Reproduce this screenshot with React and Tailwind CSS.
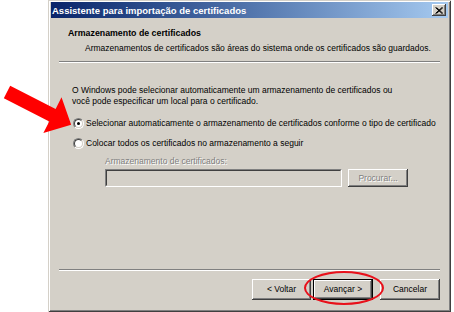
const raised =
  "bg-[#d4d0c8] shadow-[inset_-1px_-1px_0_#404040,inset_1px_1px_0_#ffffff,inset_-2px_-2px_0_#808080]";
const etched = "text-[#808080] [text-shadow:1px_1px_0_#ffffff]";

function Radio({ checked }) {
  return (
    <div className="w-[11px] h-[11px] rounded-full border border-t-[#808080] border-l-[#808080] border-b-white border-r-white">
      <div className="w-full h-full rounded-full border border-t-[#404040] border-l-[#404040] border-b-[#d4d0c8] border-r-[#d4d0c8] bg-white flex items-center justify-center">
        {checked && <div className="w-[3px] h-[3px] rounded-full bg-black" />}
      </div>
    </div>
  );
}

function Button({ children, primary, disabled, className = "" }) {
  return (
    <div
      className={`flex items-center justify-center ${raised} ${primary ? "border border-black" : ""} ${
        disabled ? etched : ""
      } ${className}`}
    >
      {children}
    </div>
  );
}

function Separator({ className = "" }) {
  return <div className={`mx-[8px] h-[2px] border-t border-t-[#808080] border-b border-b-white ${className}`} />;
}

export default function App() {
  return (
    <div className="relative w-[454px] h-[312px] bg-white overflow-hidden font-['Liberation_Sans',Arial,sans-serif] text-[8.5px] leading-[11px] text-black">
      <div className="ml-[48px] w-[403px] h-[312px] bg-[#d4d0c8] pt-[2px] px-[3px] shadow-[inset_1px_1px_0_#d4d0c8,inset_-1px_-1px_0_#404040,inset_2px_2px_0_#ffffff,inset_-2px_-2px_0_#808080]">
        {/* title bar */}
        <div className="h-[16px] flex items-center justify-between pl-[1px] pr-[2px] bg-gradient-to-r from-[#0a246a] to-[#a6caf0]">
          <span className="text-white font-bold text-[9.5px]">Assistente para importação de certificados</span>
          <div className={`w-[14px] h-[12px] flex items-center justify-center ${raised}`}>
            <svg width="8" height="7" viewBox="0 0 8 7">
              <path d="M0.5 0.5 L7 6.5 M1.5 0.5 L8 6.5 M7 0.5 L0.5 6.5 M8 0.5 L1.5 6.5" stroke="#000" strokeWidth="1" />
            </svg>
          </div>
        </div>

        {/* header */}
        <div className="mt-[10px] pl-[17px] font-bold text-[8.8px]">Armazenamento de certificados</div>
        <div className="mt-[4px] pl-[34px]">
          Armazenamentos de certificados são áreas do sistema onde os certificados são guardados.
        </div>
        <Separator className="mt-[7px]" />

        {/* body */}
        <div className="mt-[22px] pl-[21px]">
          O Windows pode selecionar automaticamente um armazenamento de certificados ou
          <br />
          você pode especificar um local para o certificado.
        </div>

        <div className="mt-[10px] pl-[22px] h-[13px] flex items-center gap-[2px]">
          <Radio checked />
          <span>Selecionar automaticamente o armazenamento de certificados conforme o tipo de certificado</span>
        </div>
        <div className="mt-[7px] pl-[22px] h-[13px] flex items-center gap-[2px]">
          <Radio />
          <span>Colocar todos os certificados no armazenamento a seguir</span>
        </div>

        <div className={`mt-[6px] pl-[54px] ${etched}`}>Armazenamento de certificados:</div>
        <div className="mt-[2px] pl-[54px] flex items-start">
          <div className="w-[237px] h-[18px] bg-[#d4d0c8] border border-t-[#808080] border-l-[#808080] border-b-white border-r-white">
            <div className="w-full h-full border border-t-[#404040] border-l-[#404040] border-b-[#d4d0c8] border-r-[#d4d0c8]" />
          </div>
          <Button disabled className="ml-[6px] w-[60px] h-[18px]">
            Procurar...
          </Button>
        </div>

        <Separator className="mt-[82px]" />

        {/* footer buttons */}
        <div className="mt-[8px] pr-[8px] flex justify-end">
          <Button className="w-[59px] h-[21px]">&lt; Voltar</Button>
          <Button primary className="ml-[2px] w-[60px] h-[21px]">
            Avançar &gt;
          </Button>
          <Button className="ml-[7px] w-[60px] h-[21px]">Cancelar</Button>
        </div>
      </div>

      {/* annotations */}
      <svg className="absolute left-0 top-[80px]" width="80" height="65" viewBox="0 0 80 65">
        <g transform="translate(7 12) rotate(27)">
          <polygon points="0,-7 51,-7 51,-20 72,0 51,20 51,7 0,7" fill="#ff0000" />
        </g>
      </svg>
      <div className="absolute left-[304px] top-[271px] w-[80px] h-[34px] rounded-[50%] border-2 border-[#e8101a]" />
    </div>
  );
}
